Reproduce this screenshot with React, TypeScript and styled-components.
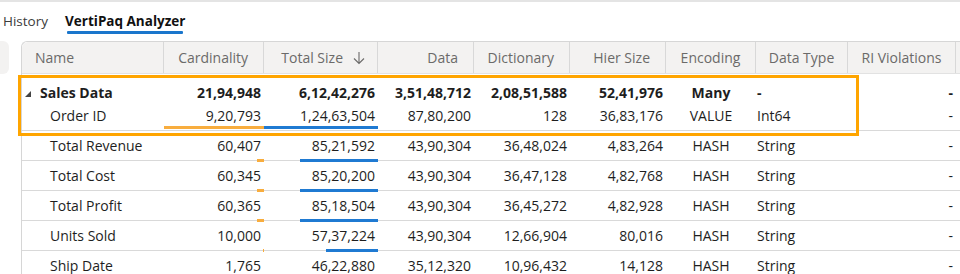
import styled, { createGlobalStyle } from "styled-components";

const GlobalStyle = createGlobalStyle`
  html, body {
    margin: 0;
    padding: 0;
    background: #ffffff;
    font-family: "Open Sans", "Noto Sans", sans-serif;
    overflow: hidden;
  }
`;

const COLS = "142px 100px 114px 96px 96px 96px 90px 92px 108px 1fr";

const Page = styled.div`
  width: 960px;
  height: 274px;
  overflow: hidden;
  border-top: 2px solid #e4e4e4;
  box-sizing: border-box;
`;

const TabBar = styled.div`
  display: flex;
  align-items: flex-start;
  gap: 17px;
  height: 39px;
  padding-left: 3px;
  box-sizing: border-box;
  padding-top: 10px;
`;

const Tab = styled.div<{ $active?: boolean }>`
  position: relative;
  font-size: 13.5px;
  line-height: 19px;
  color: ${({ $active }) => ($active ? "#111111" : "#3b3b3b")};
  font-weight: ${({ $active }) => ($active ? 700 : 400)};

  &::after {
    content: "";
    display: ${({ $active }) => ($active ? "block" : "none")};
    height: 3px;
    margin: 0 2px 0 2px;
    border-radius: 1px;
    background: #1a76cc;
  }
`;

const Main = styled.div`
  display: flex;
  align-items: flex-start;
  gap: 12px;
`;

const SideStub = styled.div`
  flex: none;
  width: 9px;
  height: 33px;
  background: #f3f2f1;
  border-radius: 0 6px 6px 0;
`;

const Table = styled.div`
  position: relative;
  flex: 1;
  min-width: 0;
  border-left: 1px solid #d6d6d6;
  border-top: 1px solid #d6d6d6;
  border-top-left-radius: 6px;
  height: 240px;
`;

const HeaderRow = styled.div`
  display: grid;
  grid-template-columns: ${COLS};
  height: 32px;
  background: #f3f2f1;
  border-bottom: 1px solid #e2e2e2;
  border-top-left-radius: 6px;
  box-sizing: border-box;
`;

const HeadCell = styled.div<{ $align?: "left" | "right" | "center" }>`
  display: flex;
  align-items: center;
  gap: 9px;
  justify-content: ${({ $align }) =>
    $align === "right" ? "flex-end" : $align === "center" ? "center" : "flex-start"};
  padding: ${({ $align }) =>
    $align === "right" ? "0 15px 0 0" : $align === "center" ? "0" : "0 0 0 13px"};
  border-right: 1px solid #d8d8d8;
  font-size: 14px;
  color: #6b6a69;
  white-space: nowrap;
  &:last-child {
    border-right: none;
  }
`;

const SortArrow = styled.svg`
  width: 14px;
  height: 14px;
  flex: none;
  margin-right: -4px;
`;

const Row = styled.div<{ $group?: boolean; $noLine?: boolean; $h: number; $pt?: number; $pb?: number }>`
  display: grid;
  grid-template-columns: ${COLS};
  height: ${({ $h }) => $h}px;
  padding-top: ${({ $pt }) => $pt || 0}px;
  padding-bottom: ${({ $pb }) => $pb || 0}px;
  box-sizing: border-box;
  border-bottom: ${({ $noLine }) => ($noLine ? "none" : "1px solid #d9d9d9")};
  font-weight: ${({ $group }) => ($group ? 700 : 400)};
  font-size: 14px;
  color: #1e1e1e;
`;

const Cell = styled.div<{ $align?: "left" | "right" | "center"; $indent?: number }>`
  position: relative;
  display: flex;
  align-items: center;
  white-space: nowrap;
  justify-content: ${({ $align }) =>
    $align === "right" ? "flex-end" : $align === "center" ? "center" : "flex-start"};
  padding-right: ${({ $align }) => ($align === "right" ? "3px" : "0")};
  padding-left: ${({ $indent }) => $indent || 0}px;
`;

const Expander = styled.svg`
  width: 6px;
  height: 6px;
  margin-right: 9px;
  margin-left: -15px;
  margin-top: 2px;
`;

const Bar = styled.div<{ $color: string }>`
  position: absolute;
  right: 0;
  bottom: -2px;
  height: 3px;
  background: ${({ $color }) => $color};
`;

const Highlight = styled.div`
  position: absolute;
  left: -4px;
  top: 33px;
  width: 841px;
  height: 61px;
  box-sizing: border-box;
  border: 3px solid #ffa500;
  pointer-events: none;
`;

type Item = {
  name: string;
  card: number;
  total: number;
  data: string;
  dict: string;
  hier: string;
  enc: string;
  type: string;
};

const fmt = (n: number) => {
  const s = String(n);
  if (s.length <= 3) return s;
  const last = s.slice(-3);
  let rest = s.slice(0, -3);
  const parts: string[] = [];
  while (rest.length > 2) {
    parts.unshift(rest.slice(-2));
    rest = rest.slice(0, -2);
  }
  if (rest) parts.unshift(rest);
  return parts.join(",") + "," + last;
};

const columns: Item[] = [
  { name: "Order ID", card: 920793, total: 12463504, data: "87,80,200", dict: "128", hier: "36,83,176", enc: "VALUE", type: "Int64" },
  { name: "Total Revenue", card: 60407, total: 8521592, data: "43,90,304", dict: "36,48,024", hier: "4,83,264", enc: "HASH", type: "String" },
  { name: "Total Cost", card: 60345, total: 8520200, data: "43,90,304", dict: "36,47,128", hier: "4,82,768", enc: "HASH", type: "String" },
  { name: "Total Profit", card: 60365, total: 8518504, data: "43,90,304", dict: "36,45,272", hier: "4,82,928", enc: "HASH", type: "String" },
  { name: "Units Sold", card: 10000, total: 5737224, data: "43,90,304", dict: "12,66,904", hier: "80,016", enc: "HASH", type: "String" },
  { name: "Ship Date", card: 1765, total: 4622880, data: "35,12,320", dict: "10,96,432", hier: "14,128", enc: "HASH", type: "String" },
];

const MAX_CARD = 920793;
const MAX_TOTAL = 12463504;

export default function App() {
  return (
    <>
      <GlobalStyle />
      <Page>
        <TabBar>
          <Tab>History</Tab>
          <Tab $active>VertiPaq Analyzer</Tab>
        </TabBar>
        <Main>
          <SideStub />
          <Table>
            <HeaderRow>
              <HeadCell>Name</HeadCell>
              <HeadCell $align="right">Cardinality</HeadCell>
              <HeadCell $align="right">
                Total Size
                <SortArrow viewBox="0 0 14 14" fill="none" stroke="#6b6a69" strokeWidth="1.1">
                  <path d="M7 1v11.5M2 7.5l5 5 5-5" />
                </SortArrow>
              </HeadCell>
              <HeadCell $align="right">Data</HeadCell>
              <HeadCell $align="right">Dictionary</HeadCell>
              <HeadCell $align="right">Hier Size</HeadCell>
              <HeadCell $align="center">Encoding</HeadCell>
              <HeadCell $align="center">Data Type</HeadCell>
              <HeadCell $align="center">RI Violations</HeadCell>
              <HeadCell />
            </HeaderRow>

            <Row $group $noLine $h={30} $pt={7}>
              <Cell $indent={18}>
                <Expander viewBox="0 0 6 6">
                  <polygon points="6,0 6,6 0,6" fill="#444444" />
                </Expander>
                Sales Data
              </Cell>
              <Cell $align="right">21,94,948</Cell>
              <Cell $align="right">6,12,42,276</Cell>
              <Cell $align="right">3,51,48,712</Cell>
              <Cell $align="right">2,08,51,588</Cell>
              <Cell $align="right">52,41,976</Cell>
              <Cell $align="center">Many</Cell>
              <Cell $indent={1}>-</Cell>
              <Cell $align="right">-</Cell>
              <Cell />
            </Row>

            {columns.map((c, i) => (
              <Row key={c.name} $h={i === 0 ? 27 : 30} $pb={i === 0 ? 3 : 0}>
                <Cell $indent={28}>{c.name}</Cell>
                <Cell $align="right">
                  {fmt(c.card)}
                  <Bar
                    $color="#f8ad3e"
                    style={{ width: Math.max(1, (c.card / MAX_CARD) * 100) }}
                  />
                </Cell>
                <Cell $align="right">
                  {fmt(c.total)}
                  <Bar $color="#1f7ad2" style={{ width: (c.total / MAX_TOTAL) * 114 }} />
                </Cell>
                <Cell $align="right">{c.data}</Cell>
                <Cell $align="right">{c.dict}</Cell>
                <Cell $align="right">{c.hier}</Cell>
                <Cell $align="center">{c.enc}</Cell>
                <Cell $indent={1}>{c.type}</Cell>
                <Cell $align="right">-</Cell>
                <Cell />
              </Row>
            ))}

            <Highlight />
          </Table>
        </Main>
      </Page>
    </>
  );
}
